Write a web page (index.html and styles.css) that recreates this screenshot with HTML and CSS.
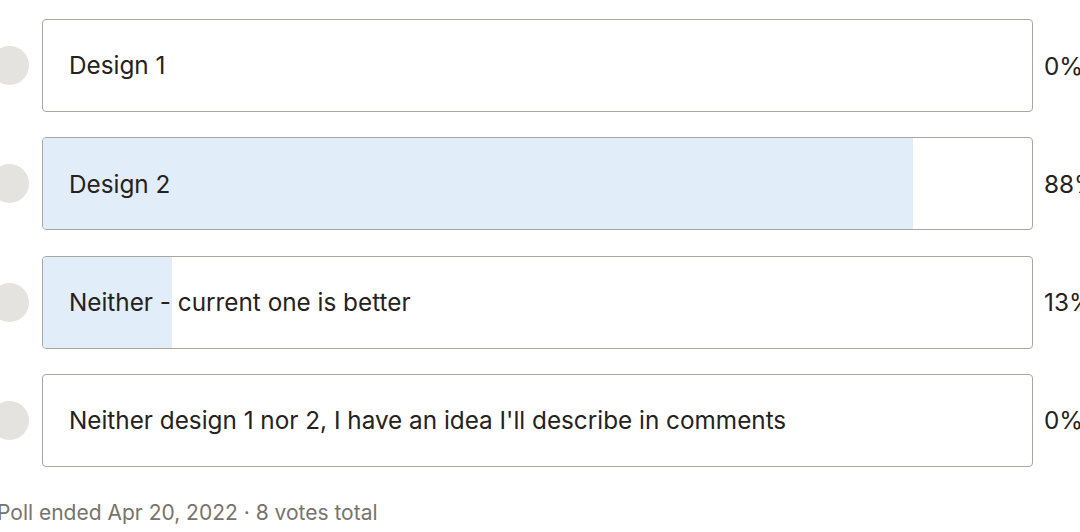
FILE: index.html
```html
<!DOCTYPE html>
<html>
<head>
<meta charset="utf-8">
<link rel="stylesheet" href="styles.css">
</head>
<body>
<div class="poll">
  <div class="option">
    <span class="radio"></span>
    <div class="box"><div class="fill" style="width:0%"></div><span class="label">Design 1</span></div>
    <span class="pct">0%</span>
  </div>
  <div class="option">
    <span class="radio"></span>
    <div class="box"><div class="fill" style="width:88%"></div><span class="label">Design 2</span></div>
    <span class="pct">88%</span>
  </div>
  <div class="option">
    <span class="radio"></span>
    <div class="box"><div class="fill" style="width:13%"></div><span class="label">Neither - current one is better</span></div>
    <span class="pct">13%</span>
  </div>
  <div class="option">
    <span class="radio"></span>
    <div class="box"><div class="fill" style="width:0%"></div><span class="label">Neither design 1 nor 2, I have an idea I'll describe in comments</span></div>
    <span class="pct">0%</span>
  </div>
  <div class="footer">Poll ended Apr 20, 2022 · 8 votes total</div>
</div>
</body>
</html>
```
FILE: styles.css
```css
html, body {
  margin: 0;
  padding: 0;
  background: #ffffff;
  overflow: hidden;
}
body {
  width: 1080px;
  height: 532px;
  font-family: Inter, "Noto Sans", sans-serif;
  color: #25221d;
}
.poll {
  display: flex;
  flex-direction: column;
  gap: 25.33px;
  padding-top: 19px;
  margin-left: -10px;
  width: 1120px;
}
.option {
  display: flex;
  align-items: center;
  gap: 13px;
}
.radio {
  flex: 0 0 39px;
  width: 39px;
  height: 39px;
  border-radius: 50%;
  background: #e4e3df;
}
.box {
  position: relative;
  flex: 0 0 991px;
  box-sizing: border-box;
  height: 93px;
  border: 1px solid #a9a69d;
  border-radius: 4px;
  display: flex;
  align-items: center;
  overflow: hidden;
}
.fill {
  position: absolute;
  top: 0;
  bottom: 0;
  left: 0;
  background: #e1edf9;
}
.label {
  position: relative;
  padding-left: 26px;
  font-size: 24.3px;
  line-height: 1;
}
.pct {
  margin-left: -2px;
  font-size: 24.3px;
}
.footer {
  margin-top: 8px;
  padding-left: 7px;
  font-size: 21px;
  color: #77736c;
}
```
